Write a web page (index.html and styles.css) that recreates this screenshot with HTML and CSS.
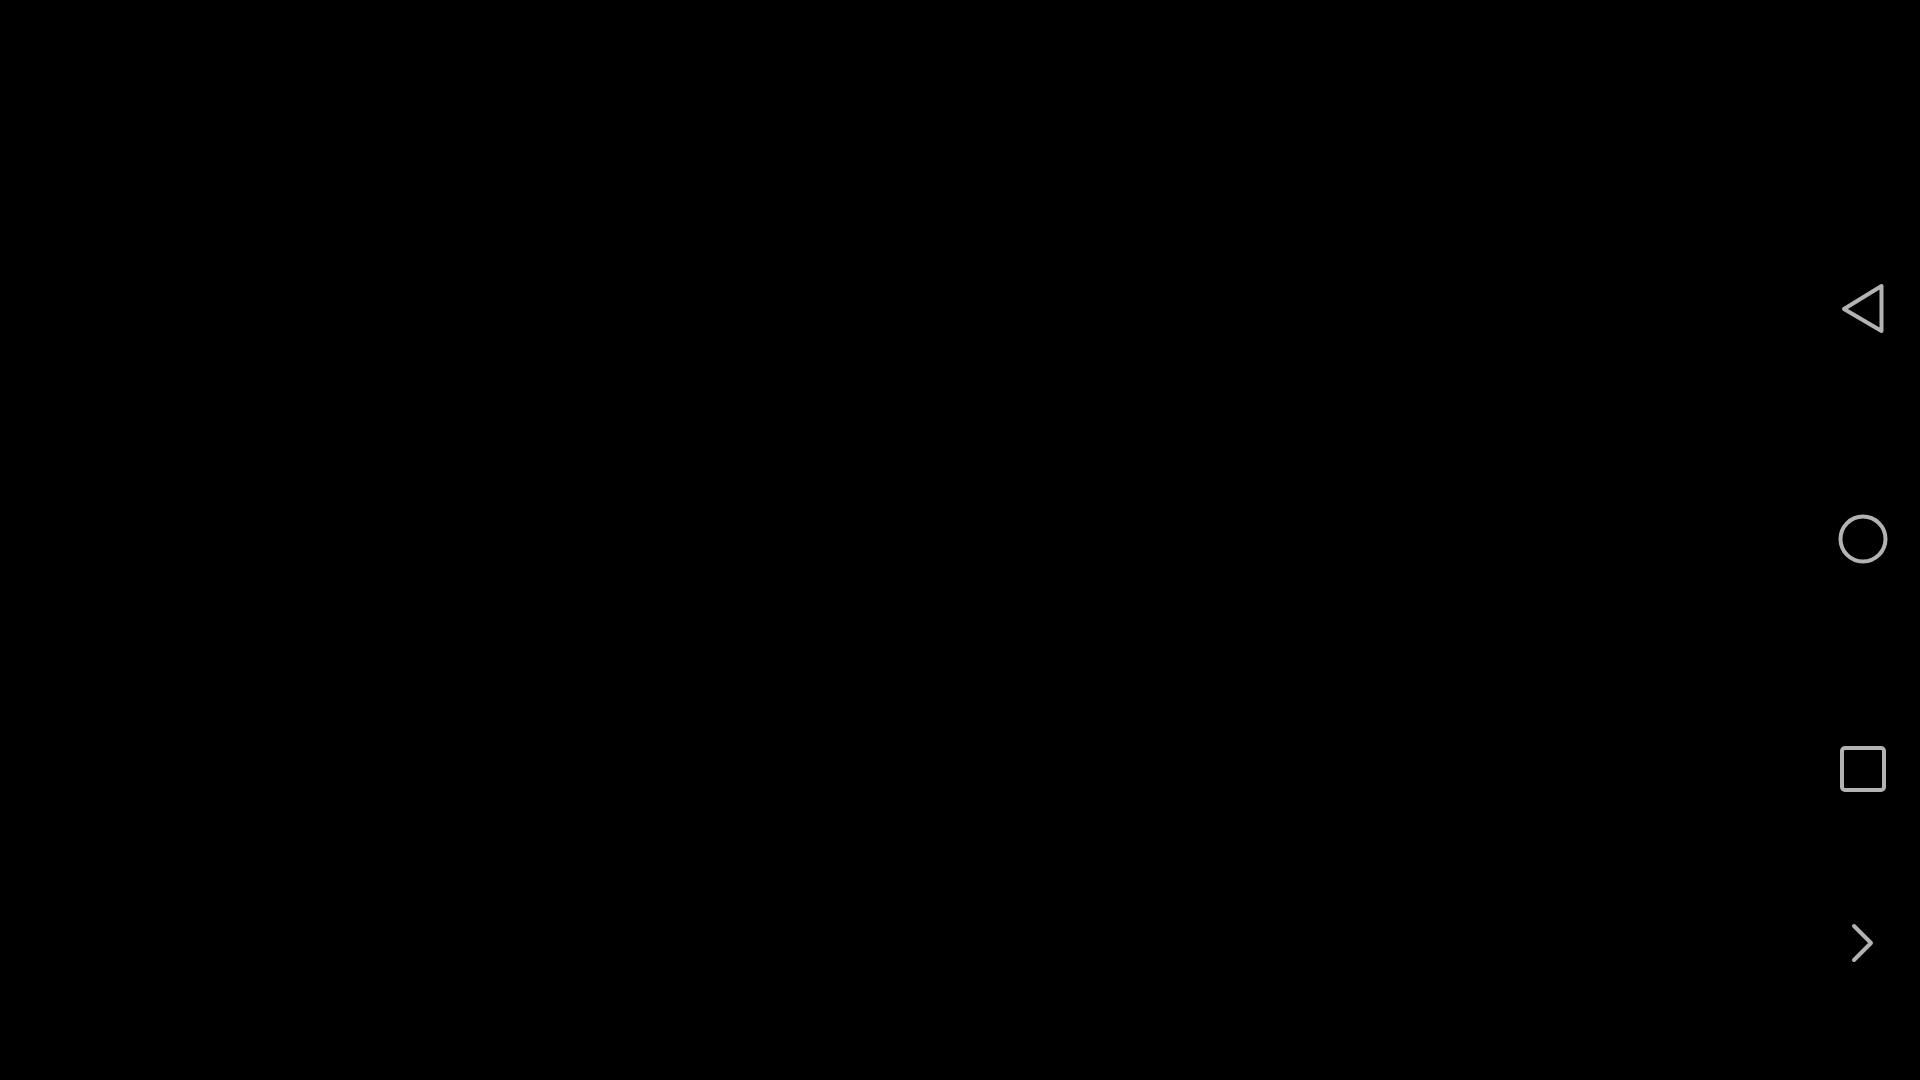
FILE: index.html
```html
<!DOCTYPE html>
<html lang="en">
<head>
<meta charset="utf-8">
<title>Navigation</title>
<link rel="stylesheet" href="styles.css">
</head>
<body>
<div class="screen">
  <div class="content"></div>
  <nav class="navbar">
    <div class="nav-btn back">
      <svg viewBox="0 0 60 60" width="60" height="60"><polygon points="11,30 48.5,7 48.5,52" /></svg>
    </div>
    <div class="nav-btn home">
      <svg viewBox="0 0 60 60" width="60" height="60"><circle cx="30" cy="30" r="22.5" /></svg>
    </div>
    <div class="nav-btn recents">
      <svg viewBox="0 0 60 60" width="60" height="60"><rect x="9" y="9" width="42" height="42" rx="3" /></svg>
    </div>
    <div class="nav-btn more">
      <svg viewBox="0 0 60 60" width="60" height="60"><polyline points="21,13 38,30 21,47" /></svg>
    </div>
  </nav>
</div>
</body>
</html>
```
FILE: styles.css
```css
html, body {
  margin: 0;
  padding: 0;
  background: #000;
  font-family: "Roboto", sans-serif;
}
.screen {
  display: flex;
  width: 100%;
  height: 100vh;
  background: #000;
}
.content {
  flex: 1;
}
.navbar {
  width: 114px;
  display: flex;
  flex-direction: column;
  align-items: center;
  padding-top: 279px;
  box-sizing: border-box;
}
.nav-btn {
  width: 60px;
  height: 60px;
  display: flex;
}
.nav-btn svg {
  fill: none;
  stroke: #b3b3b3;
  stroke-width: 4;
  stroke-linejoin: round;
  stroke-linecap: round;
}
.back { margin-bottom: 170px; }
.home { margin-bottom: 170px; }
.recents { margin-bottom: 114px; }
```
